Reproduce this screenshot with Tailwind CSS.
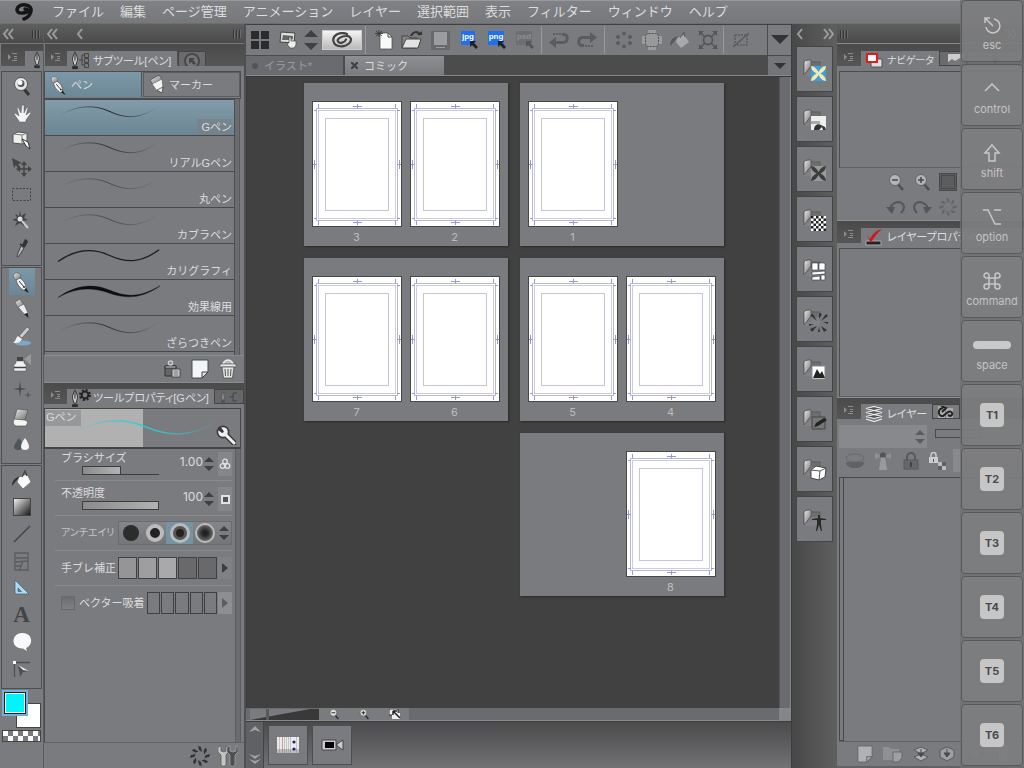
<!DOCTYPE html>
<html lang="ja">
<head>
<meta charset="utf-8">
<title>コミック</title>
<script src="https://cdn.jsdelivr.net/npm/@tailwindcss/browser@4"></script>
</head>
<body class="h-screen overflow-hidden bg-[#7a7b7f] text-[#dcdcdc] text-[11px] leading-4 font-['Liberation_Sans','Noto_Sans_CJK_JP',sans-serif]">

<svg class="absolute size-0" aria-hidden="true">
  <defs>
    <linearGradient id="silver" x1="0" y1="0" x2="1" y2="1"><stop offset="0" stop-color="#e8e8e8"/><stop offset="1" stop-color="#6e6e6e"/></linearGradient>
    <linearGradient id="fade" x1="0" x2="1"><stop offset="0" stop-color="#222" stop-opacity="0"/><stop offset=".5" stop-color="#111"/><stop offset="1" stop-color="#222" stop-opacity="0"/></linearGradient>
    <linearGradient id="cyanfade" x1="0" x2="1"><stop offset="0" stop-color="#35c9cf" stop-opacity="0"/><stop offset=".5" stop-color="#22d0d8"/><stop offset="1" stop-color="#35c9cf" stop-opacity="0"/></linearGradient>
    <linearGradient id="bw" x1="0" y1="0" x2="1" y2="1"><stop offset="0" stop-color="#f4f4f4"/><stop offset="1" stop-color="#111"/></linearGradient>
    <symbol id="page" viewBox="0 0 90 126">
      <rect width="90" height="126" fill="#47474a"/><rect x="1" y="1" width="88" height="124" fill="#fff"/>
      <g fill="none" stroke="#b9b8dc">
        <rect x="4.500" y="7.500" width="81" height="112"/><rect x="6.500" y="9.500" width="77" height="108" stroke="#cdccdf"/>
        <rect x="13.500" y="17.500" width="63" height="92" stroke="#c6c5dc"/>
      </g>
      <path d="M6.500 3v4M83.500 3v4M6.500 120v4M83.500 120v4M2 9.500h3M85 9.500h3M2 117.500h3M85 117.500h3M41 5.500h9M45.500 3v5M41 121.500h9M45.500 119v5M1 63.500h4M2.500 59v9M85 63.500h4M87.500 59v9" stroke="#9a98d8" fill="none"/>
    </symbol>
    <symbol id="menu" viewBox="0 0 10 10"><path d="M0 2v6l3-3z" fill="#8c8c8c"/><path d="M4 1.500h5M6 4.500h3M6 6.500h3M4 8.500h5" stroke="#8c8c8c"/></symbol>
    <symbol id="dbl" viewBox="0 0 12 12"><path d="M6 1L2 6l4 5M11 1L7 6l4 5" fill="none" stroke="#9c9c9c" stroke-width="2"/></symbol>
    <symbol id="sgl" viewBox="0 0 12 12"><path d="M8 1L4 6l4 5" fill="none" stroke="#9c9c9c" stroke-width="2"/></symbol>
    <symbol id="grip" viewBox="0 0 10 10"><path d="M1.500 1v8M4.500 1v8M7.500 1v8" stroke="#333"/><path d="M2.500 1v8M5.500 1v8M8.500 1v8" stroke="#6d6d6d"/></symbol>
    <symbol id="nib" viewBox="0 0 8 20"><path d="M4 1C2 5 1 8 1.500 10L3 15h2l1.500-5C7 8 6 5 4 1z" fill="#c9c9c9" stroke="#333"/><path d="M4 3v7" stroke="#222"/><path d="M1 16h6v3H1z" fill="#2c2c2c"/></symbol>
    <symbol id="pen" viewBox="0 0 24 24"><path d="M4 4c2-2 6-1 7 1l-1 4-4 1C4 9 3 6 4 4z" fill="url(#silver)" stroke="#555" stroke-width=".5"/><path d="M6 10l4-2c4 3 6 6 6 11l2 3c-6-2-10-5-12-12z" fill="#f4f4f4" stroke="#444" stroke-width=".7"/><path d="M9 11l5 6" stroke="#333"/><circle cx="14" cy="17" r="1" fill="#333"/><path d="M16 18l3 5-5-3z" fill="#222"/></symbol>
    <symbol id="folder" viewBox="0 0 26 26"><path d="M2 16V4c1-2 6-2 6-2l2 2h8v5" fill="#6f6f71" stroke="#5c5c5c"/><path d="M2 17V4c1-2 5-2 7-2v6z" fill="url(#silver)" stroke="#555" stroke-width=".8"/><path d="M2 18l7-9h8v9z" fill="#85868a" opacity=".6"/></symbol>
    <symbol id="updown" viewBox="0 0 10 16"><path d="M0 6l5-5 5 5zM0 10h10l-5 5z" fill="#3f3f41"/></symbol>
    <symbol id="spark" viewBox="0 0 20 20"><g fill="#333"><path id="r" d="M8 0l3 1 1 5-3-2z"/><use href="#r" transform="rotate(45 10 10)"/><use href="#r" transform="rotate(90 10 10)"/><use href="#r" transform="rotate(135 10 10)"/><use href="#r" transform="rotate(180 10 10)"/><use href="#r" transform="rotate(225 10 10)"/><use href="#r" transform="rotate(270 10 10)"/><use href="#r" transform="rotate(315 10 10)"/></g></symbol>
    <symbol id="sheet" viewBox="0 0 18 20"><path d="M1 1h16v12l-6 6H1z" fill="#f3f6f8" stroke="#4a4a4a"/><path d="M17 13h-6v6z" fill="#e6e6e6" stroke="#3c3c3c"/></symbol>
    <symbol id="trash" viewBox="0 0 18 20"><path d="M4 6a5 5 0 0 1 10 0" fill="#bbb" stroke="#eee" stroke-width="1.500"/><rect x="1" y="5" width="16" height="3" rx="1" fill="#eee" stroke="#444" stroke-width=".7"/><path d="M3 8h12l-1.500 11h-9z" fill="#e4e4e4" stroke="#444" stroke-width=".7"/><path d="M6 10l.5 7M9 10v7M12 10l-.5 7" stroke="#555"/></symbol>
    <symbol id="zout" viewBox="0 0 16 18"><path d="M10 11l5 6" stroke="#333" stroke-width="2.500"/><circle cx="7" cy="7" r="5.500" fill="#ddd" stroke="#555"/><path d="M4 7h6" stroke="#222" stroke-width="1.500"/></symbol>
    <symbol id="zin" viewBox="0 0 16 18"><path d="M10 11l5 6" stroke="#333" stroke-width="2.500"/><circle cx="7" cy="7" r="5.500" fill="#ddd" stroke="#555"/><path d="M4 7h6M7 4v6" stroke="#222" stroke-width="1.500"/></symbol>
    <symbol id="undo" viewBox="0 0 20 16"><path d="M4 12C4 2 17 0 18 8c0 3-1 4-3 6" fill="none" stroke="#55565a" stroke-width="2.200"/><path d="M0 8h9l-3 7z" fill="#55565a"/></symbol>
    <symbol id="wave" viewBox="0 0 110 20" preserveAspectRatio="none"><path d="M2 13C20 2 38 0 55 8s32 10 53-6" fill="none" stroke="url(#fade)"/></symbol>
    <symbol id="arrow" viewBox="0 0 8 8"><path d="M0 0h6L4 2l4 4-2 2-4-4-2 2z"/></symbol>
    <symbol id="petal" viewBox="0 0 15 15"><path d="M0 0c3 0 6 3 7.500 6C9 3 12 0 15 0c0 3-2 6-5.500 7.500C13 9 15 12 15 15c-3 0-6-3-7.500-6C6 12 3 15 0 15c0-3 2-6 5.500-7.500C2 6 0 3 0 0z"/></symbol>
    <symbol id="next" viewBox="0 0 6 10"><path d="M0 0l6 5-6 5z"/></symbol>
  </defs>
</svg>

<div class="relative flex h-full flex-col">
  <header class="h-6 shrink-0 border-t border-[#98999b] border-b border-b-[#6c6d70] bg-gradient-to-b from-[#808185] to-[#77787c]">
    <nav class="flex h-full items-center gap-4 whitespace-nowrap text-[13px] leading-5">
      <svg class="ml-3.5 w-[22px] h-5 shrink-0" viewBox="0 0 22 20" aria-label="ロゴ"><path d="M10 17C18 14 20 4 12 3 6 2 1 6 4 10c2 2 6 1 9 0 2-1 1-3-2-3" fill="none" stroke="#161616" stroke-width="3.500" stroke-linecap="round"/></svg>
      <a href="#">ファイル</a><a href="#">編集</a><a href="#">ページ管理</a><a href="#">アニメーション</a><a href="#">レイヤー</a><a href="#">選択範囲</a><a href="#">表示</a><a href="#">フィルター</a><a href="#">ウィンドウ</a><a href="#">ヘルプ</a>
    </nav>
  </header>

  <div class="flex min-h-0 flex-1">
    <!-- Tool palette -->
    <aside class="flex w-11 shrink-0 flex-col border-r border-[#5a5b5d]">
      <div class="flex h-5 shrink-0 items-center justify-between border-b border-[#77777a] bg-gradient-to-b from-[#5e5e5e] to-[#4b4b4b] px-0.5">
        <svg class="w-3 h-3"><use href="#dbl"/></svg><svg class="size-2.5"><use href="#grip"/></svg>
      </div>
      <div class="flex h-[22px] shrink-0 items-end justify-between border-l border-[#7a7b7f] bg-gradient-to-b from-[#4a4a4a] to-[#565656] pl-[7px]">
        <svg class="mb-1 size-2.5"><use href="#menu"/></svg>
        <div class="h-[15px] w-[18px] bg-[#7a7b7f] pl-2"><svg class="h-[18px] w-2"><use href="#nib"/></svg></div>
      </div>
      <div class="h-[5px] shrink-0"></div>
      <div class="mr-px ml-px flex h-[195px] shrink-0 flex-col items-center border border-[#4e4f52]">
        <button aria-label="虫眼鏡" class="grid h-[27px] w-6 place-items-center"><svg class="size-6" viewBox="0 0 24 24"><path d="M14 15l5 6" stroke="#333" stroke-width="3"/><circle cx="11" cy="10" r="6.500" fill="#e8e8e8" stroke="#555"/><circle cx="11" cy="9.500" r="3.500" fill="#555"/><circle cx="10" cy="8.500" r="2.500" fill="#fff"/></svg></button>
        <button aria-label="移動" class="grid h-[27px] w-6 place-items-center"><svg class="size-6" viewBox="0 0 24 24"><path d="M9 20L4 13l1-1 4 3-2-8 1-1 3 6 1-8h2v8l3-6 1 1-2 7 4-3 1 1-5 7v2H9z" fill="#f5f5f5" stroke="#555" stroke-width=".5"/></svg></button>
        <button aria-label="操作" class="grid h-[27px] w-6 place-items-center"><svg class="size-6" viewBox="0 0 24 24"><path d="M3 6l5-2 9 1v9l-5 2-9-1z" fill="#eee" stroke="#555"/><path d="M3 6l9 1 5-2M12 7v9" stroke="#777" fill="none"/><path d="M12 11l6 3 2 7-4-3z" fill="#fff" stroke="#333"/></svg></button>
        <button aria-label="レイヤー移動" class="grid h-[27px] w-6 place-items-center"><svg class="size-6" viewBox="0 0 24 24"><path d="M2 3l10 5-4 1 3 5-2 1-3-5-2 3z" fill="#444"/><path d="M14 8v12M8 14h12" stroke="#444" stroke-width="1.500"/><path d="M11 10l3-4 3 4zM11 18l3 4 3-4zM10 11l-4 3 4 3zM18 11l4 3-4 3z" fill="#444"/></svg></button>
        <button aria-label="選択範囲" class="grid h-[27px] w-6 place-items-center"><svg class="size-6" viewBox="0 0 24 24"><rect x="2.500" y="6.500" width="18" height="12" fill="none" stroke="#444" stroke-dasharray="2 1.500"/></svg></button>
        <button aria-label="自動選択" class="grid h-[27px] w-6 place-items-center"><svg class="size-6" viewBox="0 0 24 24"><path d="M10 2l1 5 5-3-2 5 4 2-5 1 1 5-4-3-5 3 2-5-5-1 5-2-2-4 4 2z" fill="#444"/><circle cx="10" cy="10" r="2.500" fill="#ddd"/><path d="M12 12l6 7" stroke="#ccc" stroke-width="2"/></svg></button>
        <button aria-label="スポイト" class="grid h-[27px] w-6 place-items-center"><svg class="size-6" viewBox="0 0 24 24"><path d="M12 9l3-6 2 1 1 2-3 5z" fill="#333"/><path d="M10 8l5 3" stroke="#333" stroke-width="2"/><path d="M11 10l3 2-5 8-2 1 1-4z" fill="#bbb" stroke="#444"/></svg></button>
      </div>
      <div class="mt-px mr-px ml-px flex h-[197px] shrink-0 flex-col items-center border border-[#4e4f52]">
        <button aria-label="ペン" class="grid h-[27px] w-[26px] place-items-center bg-gradient-to-b from-[#7c98a6] to-[#6b8694]"><svg class="size-6"><use href="#pen"/></svg></button>
        <button aria-label="鉛筆" class="grid h-[27px] w-6 place-items-center"><svg class="size-6" viewBox="0 0 24 24"><path d="M5 5l5-3 5 8-6 3z" fill="url(#silver)" stroke="#555" stroke-width=".6"/><path d="M8 10l6-3 4 9-3 2z" fill="#eee" stroke="#555" stroke-width=".7"/><path d="M14 17l3.500-1 1 5z" fill="#222"/></svg></button>
        <button aria-label="筆" class="grid h-[27px] w-6 place-items-center"><svg class="size-6" viewBox="0 0 24 24"><ellipse cx="13" cy="19" rx="8" ry="2.500" fill="#83b2da" opacity=".8"/><path d="M17 3l3 2-8 9-3-2z" fill="#ccc" stroke="#555" stroke-width=".7"/><path d="M8 12l4 3c-2 4-5 4-9 4 3-2 2-4 5-7z" fill="#f2f2f2"/></svg></button>
        <button aria-label="エアブラシ" class="grid h-[27px] w-6 place-items-center"><svg class="size-6" viewBox="0 0 24 24"><path d="M14 8l7-5v11z" fill="#9a9a9a"/><path d="M7 6h6v4H7z" fill="#444"/><path d="M6 10h8v2l2 2v6H4v-6l2-2z" fill="#f0f0f0" stroke="#555" stroke-width=".5"/><path d="M4 16.500h12" stroke="#444" stroke-width="1.500"/></svg></button>
        <button aria-label="デコレーション" class="grid h-[27px] w-6 place-items-center"><svg class="size-6" viewBox="0 0 24 24"><path d="M10 3l1 7 6 1-6 1-1 7-1-7-6-1 6-1zM18 13l.6 3.400 3.400.6-3.400.6L18 21l-.6-3.400L14 17l3.400-.6z" fill="#4b4b4b"/></svg></button>
        <button aria-label="消しゴム" class="grid h-[27px] w-6 place-items-center"><svg class="size-6" viewBox="0 0 24 24"><path d="M7 4l11 1-3 10H4z" fill="url(#silver)" stroke="#555" stroke-width=".7"/><path d="M4 14l11 1 3 2-2 4H6c-3-1-3-4-2-7z" fill="#f4f4f4" stroke="#555" stroke-width=".7"/></svg></button>
        <button aria-label="色混ぜ" class="grid h-[27px] w-6 place-items-center"><svg class="size-6" viewBox="0 0 24 24"><path d="M9 6c-3 4-5 7-5 9 0 4 8 4 9 0 0-2-1-5-4-9z" fill="#4d545a"/><path d="M15 6c-3 4-4 6-4 9 0 4 8 4 8 0 0-2-1-5-4-9z" fill="#f4f4f4"/></svg></button>
      </div>
      <div class="mt-px mr-px ml-px flex h-[224px] shrink-0 flex-col items-center border border-[#4e4f52]">
        <button aria-label="塗りつぶし" class="grid h-[27px] w-6 place-items-center"><svg class="size-6" viewBox="0 0 24 24"><path d="M2 18c0-6 4-9 9-10l-5 5z" fill="#333"/><path d="M9 9l8-3 4 8-8 7-6-7z" fill="#fafafa" stroke="#666" stroke-width=".7"/><path d="M12 9l3-6 2 5" fill="none" stroke="#444" stroke-width="1.300"/></svg></button>
        <button aria-label="グラデーション" class="grid h-[27px] w-6 place-items-center"><svg class="size-[18px]" viewBox="0 0 18 18"><rect x=".5" y=".5" width="17" height="17" fill="url(#bw)" stroke="#444"/></svg></button>
        <button aria-label="図形" class="grid h-[27px] w-6 place-items-center"><svg class="size-6" viewBox="0 0 24 24"><path d="M4 20L20 4" stroke="#444" stroke-width="1.500"/></svg></button>
        <button aria-label="コマ枠" class="grid h-[27px] w-6 place-items-center"><svg class="size-6" viewBox="0 0 24 24"><path d="M5 4h13v17H5zM5 9h13M5 13l13-1M10 20l3-8M5 17h6" fill="none" stroke="#5c5c5e" stroke-width="1.300"/></svg></button>
        <button aria-label="定規" class="grid h-[27px] w-6 place-items-center"><svg class="size-6" viewBox="0 0 24 24"><path d="M5 4v14h14z M8 12v3.500h3.500z" fill="#a4dcf8" fill-rule="evenodd" stroke="#4d5a62" stroke-width=".7"/></svg></button>
        <button aria-label="テキスト" class="grid h-[27px] w-6 place-items-center text-[23px] leading-6 font-bold text-[#444] font-['Liberation_Serif',serif]">A</button>
        <button aria-label="フキダシ" class="grid h-[27px] w-6 place-items-center"><svg class="size-6" viewBox="0 0 24 24"><path d="M12 3c12 0 11 13 4 15l1 3-4-2.500C0 19 1 3 12 3z" fill="#fafafa"/></svg></button>
        <button aria-label="線修正" class="grid h-[27px] w-6 place-items-center"><svg class="size-6" viewBox="0 0 24 24"><path d="M4.500 6v14M4 5.500h16" stroke="#505153" stroke-width="1.300"/><path d="M3 4h3v3H3z" fill="#fff"/><path d="M8 8l11 6-6 1-3 5z" fill="#505153"/><path d="M8 8l11 6-6-1z" fill="#eee"/></svg></button>
      </div>
      <div class="relative mt-px ml-0.5 h-[52px] w-[39px] shrink-0">
        <button aria-label="サブカラー" class="absolute top-[13px] left-3.5 size-[25px] border border-[#444] bg-white"></button>
        <button aria-label="メインカラー" class="absolute top-0 left-0 grid size-[26px] place-items-center border-2 border-[#6db3d8] bg-[#222] p-px"><span class="size-5 border border-white bg-[#00f4fc]"></span></button>
        <button aria-label="透明色" class="absolute top-10 left-0 h-3 w-[39px] border border-[#444]"><svg class="block h-full w-full bg-white" viewBox="0 0 37 10" preserveAspectRatio="none"><path d="M5 0h5v5H5zM15 0h5v5h-5zM25 0h5v5h-5zM35 0h2v5h-2zM0 5h5v5H0zM10 5h5v5h-5zM20 5h5v5h-5zM30 5h5v5h-5z" fill="#7a7a7a"/></svg></button>
      </div>
    </aside>

    <!-- Sub tools and tool properties -->
    <aside class="flex w-[202px] shrink-0 flex-col border-r-2 border-[#505052] bg-[#7a7b7f]">
      <div class="flex h-5 shrink-0 items-center border-b border-[#77777a] bg-gradient-to-b from-[#5e5e5e] to-[#4b4b4b] px-0.5">
        <svg class="h-3 w-3"><use href="#dbl"/></svg><svg class="ml-4 h-3 w-3"><use href="#sgl"/></svg><svg class="ml-auto size-2.5"><use href="#grip"/></svg>
      </div>
      <div class="flex h-[22px] shrink-0 items-end border-l border-[#7a7b7f] bg-gradient-to-b from-[#4a4a4a] to-[#565656] pl-1.5">
        <svg class="mb-1 size-2.5"><use href="#menu"/></svg>
        <div class="ml-1.5 flex h-[15px] w-[110px] bg-[#7a7b7f] pl-1 whitespace-nowrap">
          <svg class="h-[19px] w-2 shrink-0"><use href="#nib"/></svg>
          <svg class="mr-1 h-[18px] w-2.5 shrink-0" viewBox="0 0 10 18"><path d="M0 9h4M3 4v10M3 4h3M3 14h3" stroke="#444" fill="none"/><path d="M5.500 2.500h4v4h-4zM5.500 7.500h4v4h-4zM5.500 12.500h4v4h-4z" fill="#777" stroke="#444"/></svg>
          <span class="pt-0.5 text-[11px] leading-4 [font-feature-settings:'palt']">サブツール[ペン]</span>
        </div>
        <div class="ml-px h-[15px] w-7 overflow-hidden border border-b-0 border-[#444] bg-[#6a6b6e] pl-1"><svg class="h-5 w-5" viewBox="0 0 20 20"><circle cx="9" cy="9" r="7" fill="#777" stroke="#484848" stroke-width="2"/><path d="M6 6h6l-2 2 3 3-2 2-3-3-2 2z" fill="#444"/></svg></div>
      </div>
      <div class="h-[5px] shrink-0"></div>
      <div class="mr-[3px] flex h-[28px] shrink-0 gap-px border border-[#4c4d50] pb-px">
        <button class="flex w-[97px] items-center border-r border-[#4f5558] bg-gradient-to-b from-[#7c97a5] to-[#6d8896] pl-[3px]"><svg class="size-[22px]"><use href="#pen"/></svg><span class="ml-px">ペン</span></button>
        <button class="flex flex-1 items-center border border-[#5c5d60] pl-1"><svg class="h-[22px] w-5" viewBox="0 0 20 22"><path d="M2 6l9-5 3 4-8 7z" fill="url(#silver)" stroke="#444" stroke-width=".7"/><path d="M4 10l10-5 1 9-6 3z" fill="#f2f2f2" stroke="#555" stroke-width=".6"/><path d="M9 16l6-3-1 6z" fill="#eee" stroke="#333" stroke-width=".7"/></svg><span class="ml-px">マーカー</span></button>
      </div>
      <div class="mr-[3px] flex h-[256px] shrink-0">
        <ul class="flex-1 border-r border-l border-[#4c4d50]">
          <li class="relative h-[37px] border-y border-[#48494b] bg-gradient-to-b from-[#839baa] to-[#6b8693] pt-1"><svg class="ml-3 h-[18px] w-[104px]"><use href="#wave"/></svg><button class="absolute right-0.5 bottom-0 bg-[#7a7f85]/60 pl-1">Gペン</button></li>
          <li class="relative h-9 border-b border-[#48494b] pt-1"><svg class="ml-3 h-[18px] w-[104px] opacity-80"><use href="#wave"/></svg><button class="absolute right-0.5 bottom-0">リアルGペン</button></li>
          <li class="relative h-9 border-b border-[#48494b] pt-1"><svg class="ml-3 h-[18px] w-[104px] opacity-50"><use href="#wave"/></svg><button class="absolute right-0.5 bottom-0">丸ペン</button></li>
          <li class="relative h-9 border-b border-[#48494b] pt-1"><svg class="ml-3 h-[18px] w-[104px] opacity-50"><use href="#wave"/></svg><button class="absolute right-0.5 bottom-0">カブラペン</button></li>
          <li class="relative h-9 border-b border-[#48494b] pt-1"><svg class="ml-3 h-[18px] w-[104px]" viewBox="0 0 110 20" preserveAspectRatio="none"><path d="M1 15C20 1 38 0 55 8s32 10 53-6" fill="none" stroke="#1c1c1c" stroke-width="1.400"/></svg><button class="absolute right-0.5 bottom-0">カリグラフィ</button></li>
          <li class="relative h-9 border-b border-[#48494b] pt-1"><svg class="ml-3 h-[18px] w-[104px]" viewBox="0 0 110 20" preserveAspectRatio="none"><path d="M1 15C20 1 38-1 56 7s32 8 53-5C90 16 74 17 55 10S20 4 1 15z" fill="#0e0e0e" stroke="#0e0e0e" stroke-width=".4"/></svg><button class="absolute right-0.5 bottom-0">効果線用</button></li>
          <li class="relative h-9 border-b border-[#48494b] pt-1"><svg class="ml-3 h-[18px] w-[104px] opacity-80"><use href="#wave"/></svg><button class="absolute right-0.5 bottom-0">ざらつきペン</button></li>
        </ul>
        <div class="mr-px w-[5px] border-r border-[#595a5c] bg-[#6b6c6f]"></div>
      </div>
      <div class="flex h-[27px] shrink-0 items-center justify-end gap-2.5 border-t border-[#8b8c8f] pr-[7px]">
        <button aria-label="サブツールの追加"><svg class="h-[18px] w-[18px]" viewBox="0 0 18 18"><path d="M2 6h11v10H2z" fill="#666" stroke="#333"/><path d="M2 6h11v2H2z" fill="#ddd" stroke="#333"/><circle cx="7.500" cy="3" r="2" fill="none" stroke="#ccc" stroke-width="1.500"/><path d="M9 9h8v8H9z" fill="#ddd" stroke="#444"/><path d="M10.500 11h5M10.500 13h5M10.500 15h5" stroke="#666"/></svg></button>
        <button aria-label="サブツールの複製"><svg class="h-5 w-[18px]"><use href="#sheet"/></svg></button>
        <button aria-label="サブツールの削除"><svg class="h-5 w-[18px]"><use href="#trash"/></svg></button>
      </div>
      <div class="flex h-[22px] shrink-0 items-end border-t border-[#8b8c8f] bg-gradient-to-b from-[#4a4a4a] to-[#565656] pl-[7px]">
        <svg class="mb-1 size-2.5"><use href="#menu"/></svg>
        <div class="ml-1.5 flex h-[15px] w-[147px] bg-[#7a7b7f] pl-1 whitespace-nowrap">
          <svg class="h-[19px] w-2 shrink-0"><use href="#nib"/></svg>
          <svg class="size-3 shrink-0" viewBox="0 0 12 12"><circle cx="6" cy="6" r="3.400" fill="none" stroke="#222" stroke-width="2"/><circle cx="6" cy="6" r="5" fill="none" stroke="#222" stroke-width="2" stroke-dasharray="2 1.930"/></svg>
          <span class="pt-px pl-0.5 text-[11px] leading-4 [font-feature-settings:'palt']">ツールプロパティ[Gペン]</span>
        </div>
        <div class="flex h-[15px] flex-1 items-center justify-center gap-1 border border-[#444] bg-[#66676a]"><svg class="h-3 w-1.5 opacity-50"><use href="#nib"/></svg><svg class="h-3 w-2" viewBox="0 0 8 12"><path d="M0 6h3M3 2v8M3 2h4M3 10h4" stroke="#444" fill="none"/></svg></div>
      </div>
      <div class="h-[4px] shrink-0"></div>
      <div class="relative mr-[3px] flex h-[41px] shrink-0 border border-b-2 border-[#434446]">
        <div class="w-[98px] bg-[#b1b1b1]"><span class="inline-block h-4 w-9 bg-[#97989a] pl-px leading-[15px]">Gペン</span></div>
        <svg class="absolute top-2 left-6 h-6 w-[152px]" viewBox="0 0 110 20" preserveAspectRatio="none"><path d="M2 14C20 2 38 0 55 8s32 10 53-5" fill="none" stroke="url(#cyanfade)" stroke-width="1.100"/></svg>
        <button aria-label="設定" class="absolute right-1 bottom-0.5"><svg class="size-5" viewBox="0 0 20 20"><path d="M10 10l8 8" stroke="#333" stroke-width="5.500" stroke-linecap="round"/><circle cx="7" cy="7" r="6.500" fill="#3a3a3a"/><path d="M9 9l9 9" stroke="#f2f2f2" stroke-width="3" stroke-linecap="round"/><circle cx="7" cy="7" r="4.800" fill="#eee"/><path d="M4 1l3 4 1 2-2 1-4-3z" fill="#3a3a3a"/></svg></button>
      </div>
      <div class="mr-[3px] flex min-h-0 flex-1 border-l border-[#4c4d50]">
        <div class="min-w-0 flex-1 pr-[3px] pl-2.5">
          <div class="flex h-8 items-start border-b border-[#898a8d] pl-1.5 pt-px">
            <div class="w-[98px]"><label for="bs">ブラシサイズ</label>
              <div class="ml-[21px] flex h-[9px] border-b border-[#3d3d3f]"><input id="bs" type="range" value="100" class="h-[9px] w-[39px] appearance-none border border-[#3d3d3f] bg-gradient-to-r from-[#8b8b8b] to-[#b2b2b2] [&::-webkit-slider-thumb]:w-0 [&::-webkit-slider-thumb]:appearance-none"></div></div>
            <input aria-label="ブラシサイズの値" value="1.00" class="mt-1 w-11 text-right text-[12px] leading-4 font-['Inter']">
            <svg class="mt-1.5 ml-px h-4 w-2.5"><use href="#updown"/></svg>
            <button aria-label="影響元" class="mt-0.5 ml-auto grid h-6 w-3.5 place-items-center bg-[#85868a]"><svg class="size-3" viewBox="0 0 12 12" fill="none" stroke="#e2e2e2" stroke-width="1.300"><circle cx="6" cy="3.500" r="2.300"/><circle cx="3.500" cy="8" r="2.300"/><circle cx="8.500" cy="8" r="2.300"/></svg></button>
          </div>
          <div class="flex h-[35px] items-start border-b border-[#898a8d] pt-1 pl-1.5">
            <div class="w-[98px]"><label for="op">不透明度</label>
              <div class="ml-[21px] flex h-[9px]"><input id="op" type="range" value="100" class="h-[9px] w-[77px] appearance-none border border-[#3d3d3f] bg-gradient-to-r from-[#8b8b8b] to-[#b2b2b2] [&::-webkit-slider-thumb]:w-0 [&::-webkit-slider-thumb]:appearance-none"></div></div>
            <input aria-label="不透明度の値" value="100" class="mt-1 w-11 text-right text-[12px] leading-4 font-['Inter']">
            <svg class="mt-1.5 ml-px h-4 w-2.5"><use href="#updown"/></svg>
            <button aria-label="影響元" class="mt-0.5 ml-auto grid h-6 w-3.5 place-items-center bg-[#85868a]"><span class="size-[9px] border-2 border-[#e2e2e2] bg-[#555]"></span></button>
          </div>
          <div class="flex h-[35px] items-center border-b border-[#898a8d] pl-1.5">
            <span class="w-[57px] text-[10px] whitespace-nowrap text-[#c4c4c4] [font-feature-settings:'palt']">アンチエイリ</span>
            <div class="flex h-6 flex-1 items-center border border-[#6a6b6e] bg-gradient-to-b from-[#85868a] to-[#747579]">
              <button aria-label="無し" class="grid h-full flex-1 place-items-center"><span class="size-4 rounded-full bg-[#2c2c2c]"></span></button>
              <button aria-label="弱" class="grid h-full flex-1 place-items-center"><span class="size-[18px] rounded-full border-[4px] border-[#bbb] bg-[#222]"></span></button>
              <button aria-label="中" class="grid h-full w-[27px] place-items-center bg-[#7693a1]"><span class="grid size-5 place-items-center rounded-full border-[3px] border-[#bbb] bg-[#555]"><span class="size-2 rounded-full bg-[#222]"></span></span></button>
              <button aria-label="強" class="grid h-full flex-1 place-items-center"><span class="size-5 rounded-full border-2 border-[#bbb] bg-radial from-[#222] from-20% to-[#999]"></span></button>
              <svg class="mx-0.5 h-4 w-2.5"><use href="#updown"/></svg>
            </div>
          </div>
          <div class="flex h-[35px] items-center border-b border-[#898a8d] pl-1.5">
            <span class="w-[57px] whitespace-nowrap">手ブレ補正</span>
            <div class="flex h-[22px] flex-1 gap-px">
              <button aria-label="1" class="flex-1 border border-[#3f4042] bg-[#959597]"></button><button aria-label="2" class="flex-1 border border-[#3f4042] bg-[#9e9ea0]"></button><button aria-label="3" class="flex-1 border border-[#3f4042] bg-[#a9a9ab]"></button><button aria-label="4" class="flex-1 border border-[#3f4042] bg-[#69696b]"></button><button aria-label="5" class="flex-1 border border-[#3f4042] bg-[#69696b]"></button>
              <button aria-label="詳細" class="grid w-3.5 place-items-center bg-[#808185]"><svg class="h-2.5 w-1.5 fill-[#3c3c3e]"><use href="#next"/></svg></button>
            </div>
          </div>
          <div class="flex h-[34px] items-center pl-1.5">
            <input id="vec" type="checkbox" class="size-3.5 appearance-none border border-[#68696c] bg-gradient-to-b from-[#6b6c6f] to-[#808185]">
            <label for="vec" class="ml-1 w-[68px] whitespace-nowrap">ベクター吸着</label>
            <div class="flex h-[22px] flex-1 gap-px">
              <button aria-label="1" class="flex-1 border border-[#3f4042]"></button><button aria-label="2" class="flex-1 border border-[#3f4042]"></button><button aria-label="3" class="flex-1 border border-[#3f4042]"></button><button aria-label="4" class="flex-1 border border-[#3f4042]"></button><button aria-label="5" class="flex-1 border border-[#3f4042]"></button>
              <button aria-label="詳細" class="grid w-3.5 place-items-center bg-[#8d8e91]"><svg class="h-2.5 w-1.5 fill-[#5c5d5f]"><use href="#next"/></svg></button>
            </div>
          </div>
        </div>
        <div class="w-1.5 border-x border-l-[#5c5d60] border-r-[#5c5d60] bg-[#6b6c6f]"></div>
      </div>
      <div class="flex h-[26px] shrink-0 items-center justify-end gap-2 border-t border-[#606164] pr-1.5">
        <button aria-label="初期化"><svg class="size-5"><use href="#spark"/></svg></button>
        <button aria-label="詳細パレット"><svg class="h-[22px] w-5" viewBox="0 0 20 22"><path d="M0 2v5l3 3v9c0 3 5 3 5 0v-9l2-3V2L8 1v5l-2 1-3-1V1z" fill="#c4c4c4" stroke="#555" stroke-width=".7"/><path d="M9 2v5l3 3v9c0 3 5 3 5 0v-9l3-3V2l-2-1v5l-3 1-3-1V1z" fill="#4e4e50" stroke="#aaa" stroke-width=".7"/></svg></button>
      </div>
    </aside>

    <!-- Page manager -->
    <main class="flex min-w-0 flex-1 flex-col border-r border-[#3c3d3f]">
      <div class="flex h-8 shrink-0 items-center border-t border-b border-t-[#3f4042] border-b-[#4a4b4d]">
        <button aria-label="クイックアクセス" class="grid h-full w-7 place-items-center"><svg class="size-[18px]" viewBox="0 0 18 18"><path d="M0 0h8v8H0zM10 0h8v8h-8zM0 10h8v8H0zM10 10h8v8h-8z" fill="#2b2b2d"/></svg></button>
        <button aria-label="タッチ操作" class="grid h-full w-7 place-items-center"><svg class="size-[18px]" viewBox="0 0 18 18"><path d="M2 1l14 1-1 10-14-1z" fill="#ddd" stroke="#444"/><path d="M4 4l10 1v3l-4 1-7 0z" fill="#666"/><path d="M10 12V6h2v4h5v4l-2 3h-4l-3-4 1-1z" fill="#eee" stroke="#444" stroke-width=".7"/></svg></button>
        <svg class="mx-0.5 h-5 w-3.5" viewBox="0 0 14 20"><path d="M0 7l7-7 7 7zM0 13h14l-7 7z" fill="#3f4042"/></svg>
        <button aria-label="CLIP STUDIO" class="ml-0.5 grid h-5 w-10 place-items-center border border-[#ccc] bg-gradient-to-b from-[#f4f4f4] to-[#b9bab9]"><svg class="h-4 w-5" viewBox="0 0 20 16"><path d="M15 2C7-1 0 4 1.500 9.500c1.500 6 11 6 15.500 2 4-4 1-8-3-7.500-5 0-9.500 3-8 5.500 1.500 2.500 7 1 8-2" fill="none" stroke="#444" stroke-width="2.200" stroke-linecap="round"/></svg></button>
        <span class="mr-1 ml-[3px] h-7 w-px bg-[#98999c]"></span>
        <button aria-label="新規" class="grid h-full w-7 place-items-center"><svg class="h-5 w-[18px]" viewBox="0 0 18 20"><path d="M5 3h8l4 4v12H5z" fill="#fafafa" stroke="#444" stroke-width=".7"/><path d="M13 3v4h4" fill="none" stroke="#444"/><path d="M4 0v7M0 3.500h8M1 1l6 5M7 1L1 6" stroke="#333" stroke-width=".8"/></svg></button>
        <button aria-label="開く" class="grid h-full w-7 place-items-center"><svg class="h-5 w-[22px]" viewBox="0 0 22 20"><path d="M1 18V6h6l2 2h7v10z" fill="#888" stroke="#444"/><path d="M1 18L5 9h15l-3 9z" fill="#e2e2e2" stroke="#444"/><path d="M10 6c2-5 7-5 9-1" fill="none" stroke="#333" stroke-width="2"/><path d="M16 5h5V1z" fill="#333"/></svg></button>
        <button aria-label="保存" class="grid h-full w-7 place-items-center"><svg class="size-[19px]" viewBox="0 0 19 19"><path d="M0 0h19v19H0z" fill="#68696c"/><path d="M3 1h13v13H3z" fill="#9b9c9f"/><path d="M5 16h9v1H5z" fill="#9b9c9f"/></svg></button>
        <button class="relative h-full w-7 text-center text-[8px] leading-[12px] font-bold text-white"><span class="mx-auto -mt-1 block h-3.5 w-3.5 bg-[#1f6fee]">jpg</span><svg class="absolute right-1 bottom-1.5 size-2 fill-[#222]"><use href="#arrow"/></svg></button>
        <button class="relative h-full w-7 text-center text-[8px] leading-[12px] font-bold text-white"><span class="mx-auto -mt-1 block h-3.5 w-4 bg-[#1f6fee]">png</span><svg class="absolute right-1 bottom-1.5 size-2 fill-[#222]"><use href="#arrow"/></svg></button>
        <button class="relative h-full w-7 text-center text-[8px] leading-[12px] font-bold text-[#8f9093]"><span class="mx-auto -mt-1 block h-3.5 w-4 bg-[#6d6e71]">psd</span><svg class="absolute right-1 bottom-1.5 size-2 fill-[#555]"><use href="#arrow"/></svg></button>
        <span class="mx-[3px] h-7 w-px bg-[#98999c]"></span>
        <button aria-label="取り消し" class="grid h-full w-7 place-items-center"><svg class="h-4 w-5" viewBox="0 0 20 16"><path d="M6 10.500h8c5.500 0 5.500-8 1-8" fill="none" stroke="#5b5c5f" stroke-width="3"/><path d="M7 5v11l-7-5.500zM4 1h2v2H4zM7 1h2v2H7zM10 1h2v2h-2zM13 1h2v3h-2z" fill="#5b5c5f"/></svg></button>
        <button aria-label="やり直し" class="grid h-full w-7 place-items-center"><svg class="h-4 w-5" viewBox="0 0 20 16"><path d="M14 5.500H6c-5.500 0-5.500 8-1 8" fill="none" stroke="#5b5c5f" stroke-width="3"/><path d="M13 0v11l7-5.500zM5 12h2v3H5zM8 13h2v2H8zM11 13h2v2h-2zM14 13h2v2h-2z" fill="#5b5c5f"/></svg></button>
        <span class="mx-[3px] h-7 w-px bg-[#98999c]"></span>
        <button aria-label="消去" class="ml-0.5 grid h-full w-7 place-items-center"><svg class="size-[18px]" viewBox="0 0 18 18" fill="#5b5c5f"><circle cx="9" cy="2.500" r="2"/><circle cx="9" cy="15.500" r="2"/><circle cx="3" cy="6" r="2"/><circle cx="15" cy="6" r="2"/><circle cx="3" cy="12" r="2"/><circle cx="15" cy="12" r="2"/></svg></button>
        <button aria-label="選択範囲外を消去" class="grid h-full w-7 place-items-center"><svg class="size-5" viewBox="0 0 20 20"><path d="M6 0h8v20H6zM0 6h20v8H0z" fill="#9a9b9d"/><rect x="3.500" y="3.500" width="13" height="13" rx="3" fill="#98999b" stroke="#4f5053" stroke-dasharray="2 1"/></svg></button>
        <button aria-label="塗りつぶし" class="grid h-full w-7 place-items-center"><svg class="size-5" viewBox="0 0 20 20"><path d="M0 16C0 9 4 7 9 6l-5 6z" fill="#58595c"/><path d="M7 8l7-3 5 7-8 6-5-6z" fill="#a8a9ab"/><path d="M10 8l4-6 1 5" fill="none" stroke="#58595c"/></svg></button>
        <button aria-label="拡大・縮小・回転" class="grid h-full w-7 place-items-center"><svg class="size-5" viewBox="0 0 20 20"><path d="M1 1l18 18M19 1L1 19" stroke="#55565a" stroke-width="1.500"/><path d="M1 1h5L1 6zM14 1h5v5zM1 14v5h5zM19 14v5h-5z" fill="#55565a"/><circle cx="10" cy="10" r="4.500" fill="#7a7b7f" stroke="#55565a" stroke-width="1.800"/></svg></button>
        <span class="mx-px h-7 w-px bg-[#98999c]"></span>
        <button aria-label="選択解除" class="ml-0.5 grid h-full w-7 place-items-center"><svg class="size-[18px]" viewBox="0 0 18 18"><path d="M3 4h12v10H3z" fill="none" stroke="#5b5c5f" stroke-width="1.500" stroke-dasharray="2 1"/><path d="M1 16L17 2" stroke="#5b5c5f" stroke-width="1.500"/></svg></button>
        <button aria-label="コマンドの一覧" class="ml-auto grid h-full w-6 place-items-center border-l border-[#4a4b4d] bg-[#7b7c7f]"><svg class="h-2.5 w-[18px]" viewBox="0 0 18 10"><path d="M0 0h18l-9 9z" fill="#343436"/></svg></button>
      </div>
      <div class="flex h-5 shrink-0 border-b border-[#87888b] bg-[#4c4c4d]">
        <button class="flex w-[99px] items-center border-r-2 border-[#4a4b4d] bg-[#6a6b6e] text-[#9b9c9e]"><span class="mx-1.5 size-1.5 rounded-full bg-[#525355]"></span>イラスト*</button>
        <button class="flex w-[99px] items-center bg-gradient-to-b from-[#8e8f92] to-[#7a7b7f]"><svg class="mr-1.5 ml-1.5 size-[7px]" viewBox="0 0 7 7"><path d="M0 0l7 7M7 0L0 7" stroke="#414143" stroke-width="2.200"/></svg>コミック</button>
        <button aria-label="タブの一覧" class="ml-auto grid w-6 place-items-center border-l border-[#4a4b4d] bg-[#747578]"><svg class="h-1.5 w-3" viewBox="0 0 12 6"><path d="M0 0h12L6 6z" fill="#343436"/></svg></button>
      </div>
      <div class="flex min-h-0 flex-1 border-t border-l border-[#3a3a3b] bg-[#414142]">
        <div class="grid flex-1 grid-cols-[204px_204px] content-start justify-center gap-3 pt-1.5 pl-px text-center leading-5 text-[#bcbcbc] font-['Inter',sans-serif]">
          <section class="flex h-[163px] justify-between bg-[#7a7b7f] px-2 pt-[18px] shadow-[1px_1px_2px_#2a2a2a]">
            <figure><svg class="h-[126px] w-[90px]"><use href="#page"/></svg><figcaption>3</figcaption></figure>
            <figure><svg class="h-[126px] w-[90px]"><use href="#page"/></svg><figcaption>2</figcaption></figure>
          </section>
          <section class="flex h-[163px] justify-between bg-[#7a7b7f] px-2 pt-[18px] shadow-[1px_1px_2px_#2a2a2a]">
            <figure><svg class="h-[126px] w-[90px]"><use href="#page"/></svg><figcaption>1</figcaption></figure>
          </section>
          <section class="flex h-[163px] justify-between bg-[#7a7b7f] px-2 pt-[18px] shadow-[1px_1px_2px_#2a2a2a]">
            <figure><svg class="h-[126px] w-[90px]"><use href="#page"/></svg><figcaption>7</figcaption></figure>
            <figure><svg class="h-[126px] w-[90px]"><use href="#page"/></svg><figcaption>6</figcaption></figure>
          </section>
          <section class="flex h-[163px] justify-between bg-[#7a7b7f] px-2 pt-[18px] shadow-[1px_1px_2px_#2a2a2a]">
            <figure><svg class="h-[126px] w-[90px]"><use href="#page"/></svg><figcaption>5</figcaption></figure>
            <figure><svg class="h-[126px] w-[90px]"><use href="#page"/></svg><figcaption>4</figcaption></figure>
          </section>
          <section class="col-start-2 flex h-[163px] justify-end bg-[#7a7b7f] px-2 pt-[18px] shadow-[1px_1px_2px_#2a2a2a]">
            <figure><svg class="h-[126px] w-[90px]"><use href="#page"/></svg><figcaption>8</figcaption></figure>
          </section>
        </div>
        <div class="w-3 border-x border-l-[#555] border-r-[#848588] bg-[#6a6b6e]"></div>
      </div>
      <div class="flex h-[13px] shrink-0 items-center border-b border-[#8a8b8e] bg-[#6a6b6e] pl-1">
        <svg class="h-[11px] w-[69px] bg-[#7a7b7f]" viewBox="0 0 69 11" preserveAspectRatio="none"><path d="M0 11L60 0h9v11z" fill="#39393a"/><path d="M16 0h3v11h-3z" fill="#58595b"/></svg>
        <div class="flex h-full w-[90px] items-center justify-between bg-[#7a7b7f] pr-2 pl-2.5">
          <button aria-label="縮小"><svg class="block h-3 w-2.5"><use href="#zout"/></svg></button><button aria-label="拡大"><svg class="block h-3 w-2.5"><use href="#zin"/></svg></button>
          <button aria-label="全体表示"><svg class="block h-2.5 w-3" viewBox="0 0 12 10"><path d="M0 0h9v6H0z" fill="#eee" stroke="#333"/><path d="M3 4h8v6H3z" fill="#eee"/><path d="M4 2l7 7M4 2h4M4 2v4" stroke="#222" stroke-width="1.500"/></svg></button>
        </div>
        <span class="ml-auto h-[13px] w-3 bg-[#85868a]"></span>
      </div>
      <div class="flex h-[47px] shrink-0 items-start gap-1 border-t border-[#3c3d3f] bg-gradient-to-b from-[#4b4b4c] to-[#727275]">
        <div class="flex h-full w-[18px] flex-col items-center justify-between border-r border-[#444] bg-[#606164] py-1">
          <svg class="h-1.5 w-3" viewBox="0 0 12 6"><path d="M0 6l6-6 6 6-6-2z" fill="#a3a3a5"/></svg><svg class="h-2.5 w-3" viewBox="0 0 12 10"><path d="M0 0l6 2 6-2-6 5zM0 5l6 2 6-2-6 5z" fill="#a3a3a5"/></svg>
        </div>
        <button aria-label="定規" class="mt-[3px] grid h-10 w-10 place-items-center border border-[#4d4e50] bg-[#7a7b7f]"><svg class="h-4 w-[22px]" viewBox="0 0 22 16"><path d="M0 0h22v16H0z" fill="#ececec"/><path d="M2.500 0v16M7.500 0v16M9.500 0v16M11.500 0v16M13.500 0v16M19.500 0v16" stroke="#aaa" stroke-width=".6"/><path d="M0 12h22v4H0z" fill="#777" opacity=".4"/><path d="M5.500 0v16" stroke="#b88" stroke-width=".8"/><circle cx="17" cy="5" r="1.600" fill="#22227d"/><circle cx="17" cy="12" r="1.600" fill="#22227d"/></svg></button>
        <button aria-label="タイムライン" class="mt-[3px] grid h-10 w-10 place-items-center border border-[#4d4e50] bg-[#7a7b7f]"><svg class="h-3 w-[23px]" viewBox="0 0 23 12"><path d="M1 1h14v10H1z" fill="#ccc" stroke="#444"/><path d="M4 3h9v6H4z" fill="#000"/><path d="M16 5l6-4v10l-6-4z" fill="#ccc" stroke="#444"/></svg></button>
      </div>
    </main>

    <!-- Materials -->
    <aside class="flex w-[45px] shrink-0 flex-col bg-gradient-to-r from-[#484848] to-[#5f5f5f]">
      <div class="flex h-[22px] shrink-0 items-center justify-between pr-0.5 pl-0.5 pb-0.5"><svg class="h-3 w-3"><use href="#sgl"/></svg><svg class="h-3 w-3 rotate-180"><use href="#dbl"/></svg></div>
      <div class="flex flex-col gap-1 pl-1">
        <button aria-label="素材 カラーパターン" class="grid h-[46px] w-[37px] place-items-center border border-[#454547] bg-[#7a7b7f] pt-1"><svg class="size-[26px]" viewBox="0 0 26 26"><use href="#folder"/><path d="M9 8h15v15H9z" fill="#3b9fdb"/><use href="#petal" x="9" y="8" width="15" height="15" fill="#f3e9ad"/></svg></button>
        <button aria-label="素材 画像" class="grid h-[46px] w-[37px] place-items-center border border-[#454547] bg-[#7a7b7f] pt-1"><svg class="size-[26px]" viewBox="0 0 26 26"><use href="#folder"/><path d="M9 8h15v14H9z" fill="#eee"/><path d="M9 13h9v3H9z" fill="#aaa"/><path d="M12 22c0-5 4-7 7-5l4 2 1 3h-3l-1-3-3 3z" fill="#333"/></svg></button>
        <button aria-label="素材 単色パターン" class="grid h-[46px] w-[37px] place-items-center border border-[#454547] bg-[#7a7b7f] pt-1"><svg class="size-[26px]" viewBox="0 0 26 26"><use href="#folder"/><path d="M9 8h15v15H9z" fill="#999"/><use href="#petal" x="9" y="8" width="15" height="15" fill="#3c3c3c"/></svg></button>
        <button aria-label="素材 トーン" class="grid h-[46px] w-[37px] place-items-center border border-[#454547] bg-[#7a7b7f] pt-1"><svg class="size-[26px]" viewBox="0 0 26 26"><use href="#folder"/><path d="M9 8h15v15H9z" fill="#fff"/><path d="M9 9.250h15M9 14.250h15M9 19.250h15" stroke="#222" stroke-width="2.500" stroke-dasharray="2.500 2.500"/><path d="M11.500 11.750H24M11.500 16.750H24M11.500 21.750H24" stroke="#222" stroke-width="2.500" stroke-dasharray="2.500 2.500"/></svg></button>
        <button aria-label="素材 コマ枠" class="grid h-[46px] w-[37px] place-items-center border border-[#454547] bg-[#7a7b7f] pt-1"><svg class="size-[26px]" viewBox="0 0 26 26"><use href="#folder"/><path d="M10 5h6v7h-6zM17 5h6v7h-6zM10 14l13-1v3l-13 1zM10 19l8-1v4h-8zM19 17h4v5h-4z" fill="#fff" stroke="#333" stroke-width=".6"/></svg></button>
        <button aria-label="素材 効果線" class="grid h-[46px] w-[37px] place-items-center border border-[#454547] bg-[#7a7b7f] pt-1"><svg class="size-[26px]" viewBox="0 0 26 26"><use href="#folder"/><path d="M8 7l7 6-4-7zM17 5l0 6 3-5zM26 8l-7 5 5-7zM26 14h-5l5 2zM25 22l-6-4 3 6zM16 24l1-5 1 5zM8 21l7-3-5 6zM7 16h5l-5 2z" fill="#333"/></svg></button>
        <button aria-label="素材 背景" class="grid h-[46px] w-[37px] place-items-center border border-[#454547] bg-[#7a7b7f] pt-1"><svg class="size-[26px]" viewBox="0 0 26 26"><use href="#folder"/><path d="M10 8h13v13H10z" fill="#fff" stroke="#888"/><path d="M11 20l4-9 3 5 2-3 3 7z" fill="#222"/></svg></button>
        <button aria-label="素材 ペン" class="grid h-[46px] w-[37px] place-items-center border border-[#454547] bg-[#7a7b7f] pt-1"><svg class="size-[26px]" viewBox="0 0 26 26"><use href="#folder"/><path d="M10 9h13v12H10z" fill="#777" stroke="#444"/><path d="M12 19l2-4 8-5 3 2-9 6z" fill="#222"/></svg></button>
        <button aria-label="素材 3D" class="grid h-[46px] w-[37px] place-items-center border border-[#454547] bg-[#7a7b7f] pt-1"><svg class="size-[26px]" viewBox="0 0 26 26"><use href="#folder"/><path d="M9 12l5-4 10 2-1 9-6 3-8-2z" fill="#fff" stroke="#444"/><path d="M9 12l9 1 6-3M18 13l-1 9" fill="none" stroke="#555"/></svg></button>
        <button aria-label="素材 ポーズ" class="grid h-[46px] w-[37px] place-items-center border border-[#454547] bg-[#7a7b7f] pt-1"><svg class="size-[26px]" viewBox="0 0 26 26"><use href="#folder"/><path d="M16 7h2v3l6 1v1h-5v4l1 7h-1l-2-6-2 6h-1l1-7v-4h-5v-1l6-1z" fill="#2a2a2a"/></svg></button>
      </div>
    </aside>

    <!-- Navigator, layer property, layers -->
    <aside class="flex w-[187px] shrink-0 flex-col overflow-hidden border-b-2 border-[#606164]">
      <div class="flex h-5 shrink-0 items-center justify-between border-b border-[#8b8c8f] bg-gradient-to-b from-[#5e5e5e] to-[#4b4b4b] pr-1.5 pl-0.5"><svg class="size-2.5"><use href="#grip"/></svg><svg class="h-3 w-3 rotate-180"><use href="#dbl"/></svg></div>
      <div class="flex h-[22px] shrink-0 items-end bg-gradient-to-b from-[#4a4a4a] to-[#565656] pl-[7px]">
        <svg class="mb-1 size-2.5"><use href="#menu"/></svg>
        <div class="ml-[7px] flex h-[15px] w-[78px] bg-[#7a7b7f] pl-1 whitespace-nowrap">
          <svg class="mt-0.5 h-4 w-[18px] shrink-0" viewBox="0 0 18 16"><path d="M6 6h11v8H6z" fill="#ddd" stroke="#555"/><path d="M2 1h10v8H2z" fill="#fff" stroke="#e01b22" stroke-width="2"/></svg>
          <span class="pt-0.5 pl-1 text-[10px] leading-4 [font-feature-settings:'palt']">ナビゲータ</span>
        </div>
        <div class="h-[15px] w-7 overflow-hidden border border-[#444] bg-[#6a6b6e] pt-0.5 pl-2"><svg class="h-3 w-4" viewBox="0 0 16 12"><path d="M0 0h16v12H0z" fill="#ccc"/><path d="M0 8l4-3 3 2 5-3 4 3v5H0z" fill="#777"/></svg></div>
        <div class="h-[15px] w-7 border border-[#444] bg-[#6a6b6e]"></div><div class="h-[15px] w-7 border border-[#444] bg-[#6a6b6e]"></div>
      </div>
      <div class="h-[5px] shrink-0"></div>
      <div class="ml-0.5 h-[97px] shrink-0 border-t border-b border-l border-t-[#4c4d50] border-b-[#606164] border-l-[#4c4d50]"></div>
      <div class="grid h-[51px] shrink-0 grid-cols-[repeat(5,26px)] place-items-center pt-0.5 pl-[46px]">
        <button aria-label="ズームアウト"><svg class="block h-[18px] w-4 opacity-60"><use href="#zout"/></svg></button><button aria-label="ズームイン"><svg class="block h-[18px] w-4 opacity-60"><use href="#zin"/></svg></button>
        <button aria-label="フィット" class="size-[18px] border-[3px] border-double border-[#48494b] bg-[#5c5d5f]"></button><span class="size-4 bg-[#888]"></span><span class="size-4 bg-[#888]"></span>
        <button aria-label="左回転"><svg class="block h-4 w-5"><use href="#undo"/></svg></button><button aria-label="右回転"><svg class="block h-4 w-5 -scale-x-100"><use href="#undo"/></svg></button><button aria-label="回転リセット"><svg class="block size-[18px] opacity-30"><use href="#spark"/></svg></button>
      </div>
      <div class="mt-px flex h-[23px] shrink-0 items-end border-t border-[#8b8c8f] bg-gradient-to-b from-[#4a4a4a] to-[#565656] pl-[7px]">
        <svg class="mb-1 size-2.5"><use href="#menu"/></svg>
        <div class="ml-[7px] flex h-[15px] flex-1 bg-[#7a7b7f] pl-1 whitespace-nowrap">
          <svg class="h-[18px] w-[18px] shrink-0" viewBox="0 0 18 18"><path d="M1 13h15v4H1z" fill="#222" stroke="#aaa"/><path d="M2 7l3 4C8 5 12 2 17 1 12 5 9 9 6 15z" fill="#d4131a"/></svg>
          <span class="pt-px pl-1 text-[11px] leading-4 [font-feature-settings:'palt']">レイヤープロパティ</span>
        </div>
      </div>
      <div class="h-[5px] shrink-0"></div>
      <div class="ml-0.5 h-[149px] shrink-0 border-t border-b border-l border-t-[#4c4d50] border-b-[#606164] border-l-[#4c4d50]"></div>
      <div class="flex h-[22px] shrink-0 items-end border-t border-[#8b8c8f] bg-gradient-to-b from-[#4a4a4a] to-[#565656] pl-[7px]">
        <svg class="mb-1 size-2.5"><use href="#menu"/></svg>
        <div class="ml-[7px] flex h-[15px] w-[71px] bg-[#7a7b7f] pl-1 whitespace-nowrap">
          <svg class="mt-0.5 h-4 w-[18px] shrink-0" viewBox="0 0 18 16"><path d="M1 2.500l8-2 8 2-8 2zM1 6.500l8-2 8 2-8 2zM1 10.500l8-2 8 2-8 2z" fill="#555" stroke="#eee" stroke-width="1.200"/><path d="M1 13l8 2.500 8-2.500" fill="none" stroke="#eee" stroke-width="1.200"/></svg>
          <span class="pt-0.5 pl-1 text-[11px] leading-4 [font-feature-settings:'palt']">レイヤー</span>
        </div>
        <div class="grid h-[15px] w-7 place-items-center border border-[#444] bg-[#7a7b7f]"><svg class="h-3 w-[18px]" viewBox="0 0 18 12"><path d="M1 0h7v12H1zM9 2h7v10H9z" fill="#aaa"/><path d="M6 2C0 3 1 11 6 10l5-4c4-2 6 3 2 4l-2-1M4 0l5 2-4 4" fill="none" stroke="#222" stroke-width="2"/></svg></div>
      </div>
      <div class="flex h-[29px] shrink-0 items-end gap-2 pl-0.5">
        <div class="flex h-[23px] w-[88px] items-center justify-end bg-[#88898c] pr-0.5"><svg class="h-4 w-2.5 opacity-60"><use href="#updown"/></svg></div>
        <div class="mb-2.5 h-[9px] w-[46px] border border-[#48494b]"></div>
      </div>
      <div class="flex h-[29px] shrink-0 items-center pb-1 gap-2.5 pl-2">
        <svg class="h-4 w-5" viewBox="0 0 20 16"><ellipse cx="10" cy="5" rx="9" ry="4" fill="none" stroke="#5d5e60" stroke-dasharray="2 1"/><path d="M1 9h18c0 8-18 8-18 0z" fill="#606163"/></svg>
        <svg class="h-5 w-4" viewBox="0 0 16 20"><path d="M5 3l3-2 3 2v3H5z" fill="#555"/><path d="M6 7h4l2 12H4z" fill="#999a9c"/><path d="M0 2l5 2v2L0 8zM16 2l-5 2v2l5 2z" fill="#8f9092"/></svg>
        <svg class="ml-0.5 h-[18px] w-4" viewBox="0 0 16 18"><path d="M4 8V5a4 4 0 0 1 8 0v3" fill="none" stroke="#58595b" stroke-width="2"/><rect x="1" y="8" width="14" height="9" fill="#66676a" stroke="#58595b"/><path d="M8 10v5" stroke="#444" stroke-width="2"/></svg>
        <svg class="h-[18px] w-[18px]" viewBox="0 0 18 18"><path d="M2 5V3a2.500 2.500 0 0 1 5 0v2" fill="none" stroke="#ccc" stroke-width="1.500"/><path d="M0 5h9v6H0z" fill="#ccc"/><path d="M4 7h1v3H4z" fill="#555"/><path d="M9 10h8v8H9z" fill="#606163"/><path d="M9 10h4v4H9zM13 14h4v4h-4z" fill="#bbb"/></svg>
        <div class="-ml-1 flex h-[23px] flex-1 items-center justify-around bg-[#88898c]"><svg class="h-4 w-2.5 opacity-40"><use href="#updown"/></svg><svg class="h-4 w-2.5 opacity-40"><use href="#updown"/></svg></div>
      </div>
      <div class="ml-0.5 flex min-h-0 flex-1 border-t border-b border-t-[#45464a] border-b-[#606164]"><div class="w-[5px] border border-t-0 border-[#45464a]"></div></div>
      <div class="flex h-6 shrink-0 items-center gap-2.5 pl-5 opacity-45">
        <button aria-label="新規ラスターレイヤー"><svg class="block h-[18px] w-4"><use href="#sheet"/></svg></button>
        <button aria-label="新規フォルダー"><svg class="block h-[18px] w-5" viewBox="0 0 20 18"><path d="M0 2h6l2 2h8v11H0z" fill="#aaa"/><path d="M10 7h9v6l-4 4h-5z" fill="#ccc" stroke="#555"/></svg></button>
        <button aria-label="下に転写"><svg class="block size-4" viewBox="0 0 16 16"><path d="M1 11l7-3 7 3-7 4zM1 4l7-3 7 3-7 4z" fill="#eee" stroke="#333"/><path d="M8 3v6M5 7l3 4 3-4z" fill="#111" stroke="#111"/></svg></button>
        <button aria-label="下のレイヤーに結合"><svg class="block size-4" viewBox="0 0 16 16"><path d="M1 4l7-3 7 3v7l-7 4-7-4z" fill="#ccc" stroke="#333"/><path d="M8 3v6M5 7l3 4 3-4z" fill="#111" stroke="#111"/></svg></button>
        <svg class="h-4 w-5" viewBox="0 0 20 16"><path d="M0 2h20v12H0z" fill="#777"/><circle cx="10" cy="8" r="4" fill="#aaa"/></svg>
        <svg class="h-[18px] w-4"><use href="#trash"/></svg>
      </div>
    </aside>
  </div>

  <!-- Edge keyboard, floats above the palettes -->
  <div class="absolute top-0 right-0 flex h-full w-16 flex-col gap-0.5 bg-[#6f7072]/75 pr-px pb-0.5 pl-px text-center text-[11px] text-[#c4c4c4] font-['Inter',sans-serif]">
    <button class="flex flex-1 flex-col items-center justify-center rounded border border-[#58595b] bg-[#808082]/75"><svg class="mt-1.5 size-5" viewBox="0 0 20 20" fill="none" stroke="#c8c8c8" stroke-width="1.500"><path d="M12 4a7 7 0 1 1-8 8M3 3l8 8M3 8V3h5"/></svg><span class="mt-0.5">esc</span></button>
    <button class="flex flex-1 flex-col items-center justify-center rounded border border-[#58595b] bg-[#808082]/75"><svg class="mt-1.5 size-5" viewBox="0 0 20 20" fill="none" stroke="#c8c8c8" stroke-width="1.500"><path d="M3 12l7-7 7 7"/></svg><span class="mt-0.5">control</span></button>
    <button class="flex flex-1 flex-col items-center justify-center rounded border border-[#58595b] bg-[#808082]/75"><svg class="mt-1.5 size-5" viewBox="0 0 20 20" fill="none" stroke="#c8c8c8" stroke-width="1.500"><path d="M10 2l7 8h-4v8H7v-8H3z"/></svg><span class="mt-0.5">shift</span></button>
    <button class="flex flex-1 flex-col items-center justify-center rounded border border-[#58595b] bg-[#808082]/75"><svg class="mt-1.5 size-5" viewBox="0 0 20 20" fill="none" stroke="#c8c8c8" stroke-width="1.500"><path d="M1 3h5l7 14h6M12 3h7"/></svg><span class="mt-0.5">option</span></button>
    <button class="flex flex-1 flex-col items-center justify-center rounded border border-[#58595b] bg-[#808082]/75"><svg class="mt-1.5 size-5" viewBox="0 0 20 20" fill="none" stroke="#c8c8c8" stroke-width="1.500"><path d="M7 7h6v6H7zM7 7H4.500A2.500 2.500 0 1 1 7 4.500zM13 7V4.500A2.500 2.500 0 1 1 15.500 7zM13 13h2.500A2.500 2.500 0 1 1 13 15.500zM7 13v2.500A2.500 2.500 0 1 1 4.500 13z"/></svg><span class="mt-0.5">command</span></button>
    <button class="flex flex-1 flex-col items-center justify-center rounded border border-[#58595b] bg-[#808082]/75"><span class="mt-3 h-2 w-[38px] rounded-sm bg-[#c9c9ca]"></span><span class="mt-2">space</span></button>
    <button class="grid flex-1 place-items-center rounded border border-[#58595b] bg-[#808082]/75"><span class="size-6 rounded bg-[#c6c6c7] text-[11px] leading-6 font-bold text-[#4a4a4c]">T1</span></button>
    <button class="grid flex-1 place-items-center rounded border border-[#58595b] bg-[#808082]/75"><span class="size-6 rounded bg-[#c6c6c7] text-[11px] leading-6 font-bold text-[#4a4a4c]">T2</span></button>
    <button class="grid flex-1 place-items-center rounded border border-[#58595b] bg-[#808082]/75"><span class="size-6 rounded bg-[#c6c6c7] text-[11px] leading-6 font-bold text-[#4a4a4c]">T3</span></button>
    <button class="grid flex-1 place-items-center rounded border border-[#58595b] bg-[#808082]/75"><span class="size-6 rounded bg-[#c6c6c7] text-[11px] leading-6 font-bold text-[#4a4a4c]">T4</span></button>
    <button class="grid flex-1 place-items-center rounded border border-[#58595b] bg-[#808082]/75"><span class="size-6 rounded bg-[#c6c6c7] text-[11px] leading-6 font-bold text-[#4a4a4c]">T5</span></button>
    <button class="grid flex-1 place-items-center rounded border border-[#58595b] bg-[#808082]/75"><span class="size-6 rounded bg-[#c6c6c7] text-[11px] leading-6 font-bold text-[#4a4a4c]">T6</span></button>
  </div>
</div>
</body>
</html>
